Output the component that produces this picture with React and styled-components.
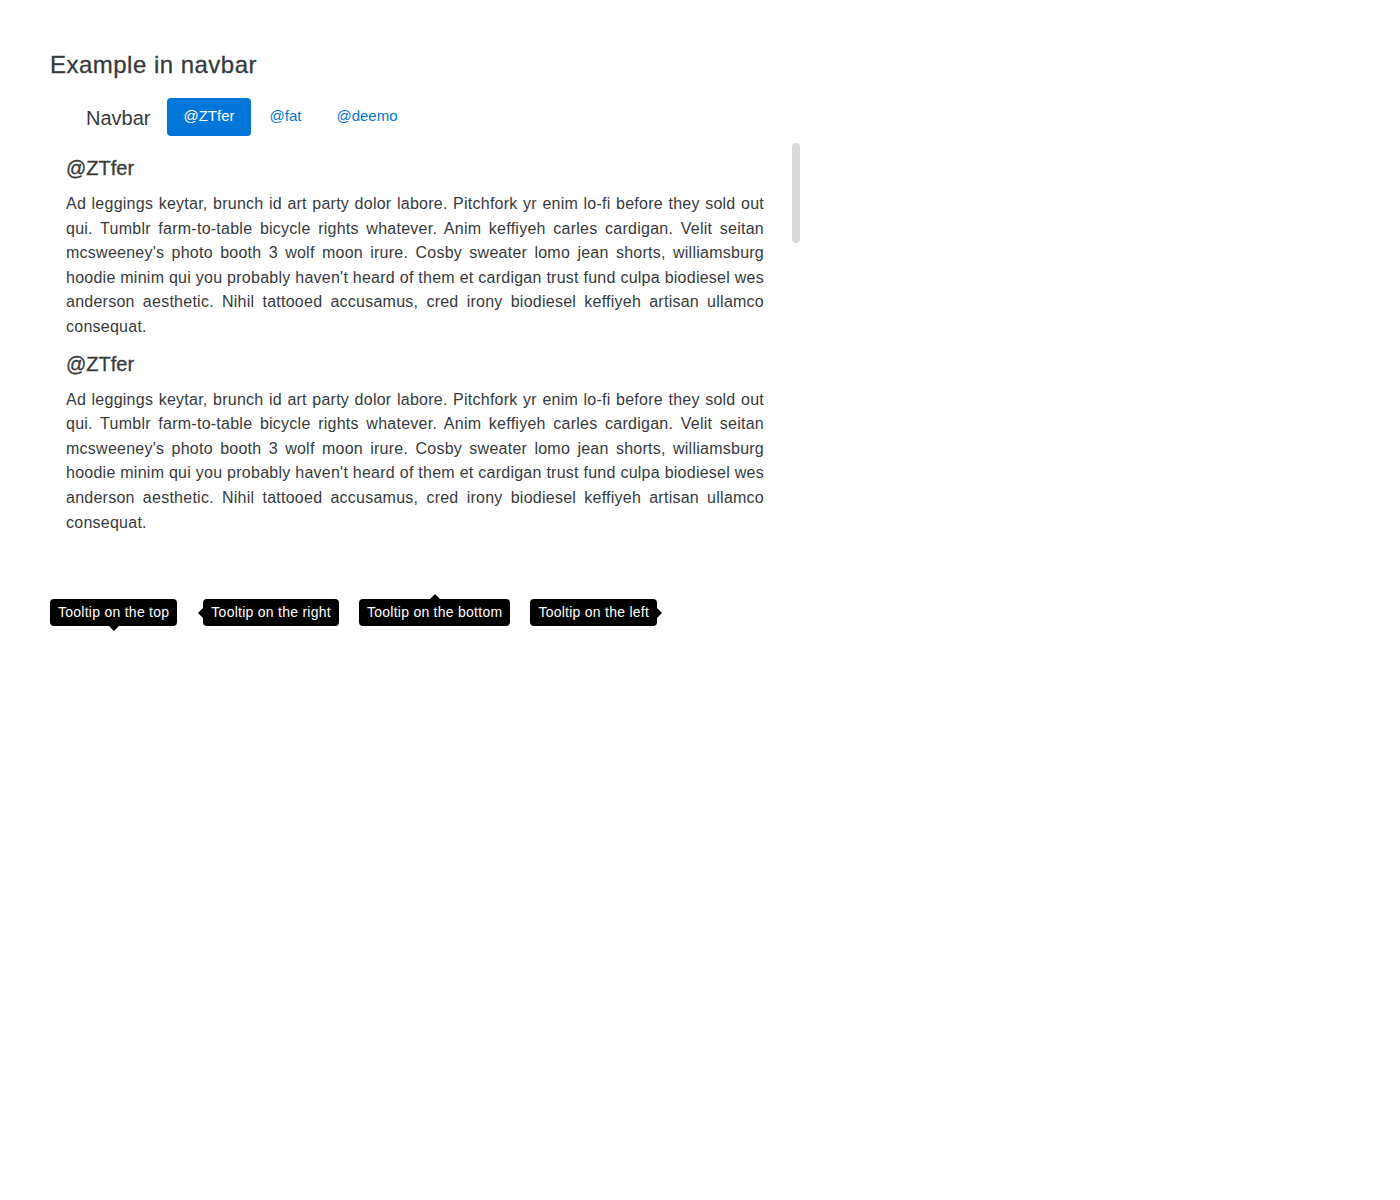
import React from 'react';
import styled, { createGlobalStyle, css } from 'styled-components';

const GlobalStyle = createGlobalStyle`
  html, body {
    margin: 0;
    padding: 0;
    background: #fff;
  }
  body {
    font-family: "Liberation Sans", Arial, Helvetica, sans-serif;
    color: #373a3c;
  }
`;

const filler =
  "Ad leggings keytar, brunch id art party dolor labore. Pitchfork yr enim lo-fi before they sold out qui. Tumblr farm-to-table bicycle rights whatever. Anim keffiyeh carles cardigan. Velit seitan mcsweeney's photo booth 3 wolf moon irure. Cosby sweater lomo jean shorts, williamsburg hoodie minim qui you probably haven't heard of them et cardigan trust fund culpa biodiesel wes anderson aesthetic. Nihil tattooed accusamus, cred irony biodiesel keffiyeh artisan ullamco consequat.";

const sections = [
  { id: 'ztfer-1', title: '@ZTfer' },
  { id: 'ztfer-2', title: '@ZTfer' },
  { id: 'fat-1', title: '@fat' },
  { id: 'fat-2', title: '@fat' },
  { id: 'deemo-1', title: '@deemo' },
  { id: 'deemo-2', title: '@deemo' },
  { id: 'deemo-3', title: '@deemo' },
  { id: 'deemo-4', title: '@deemo' }
];

const navItems = [
  { label: '@ZTfer', active: true },
  { label: '@fat' },
  { label: '@deemo' }
];

const tooltips = [
  { label: 'Tooltip on the top', placement: 'top' },
  { label: 'Tooltip on the right', placement: 'right' },
  { label: 'Tooltip on the bottom', placement: 'bottom' },
  { label: 'Tooltip on the left', placement: 'left' }
];

const App = () => (
  <Page>
    <GlobalStyle />
    <Title>Example in navbar</Title>
    <Navbar>
      <Brand>Navbar</Brand>
      <Nav>
        {navItems.map(item => (
          <NavLink key={item.label} active={item.active}>
            {item.label}
          </NavLink>
        ))}
      </Nav>
    </Navbar>
    <ScrollFrame>
      <ScrollArea>
        {sections.map(section => (
          <Section key={section.id}>
            <SectionTitle>{section.title}</SectionTitle>
            <Paragraph>{filler}</Paragraph>
          </Section>
        ))}
      </ScrollArea>
      <ScrollThumb />
    </ScrollFrame>
    <TooltipRow>
      {tooltips.map(tip => (
        <Tooltip key={tip.placement} placement={tip.placement}>
          {tip.label}
        </Tooltip>
      ))}
    </TooltipRow>
  </Page>
);

const Page = styled.div`
  padding: 52px 50px 40px;
`;

const Title = styled.h2`
  margin: 0;
  font-size: 24px;
  font-weight: 500;
  line-height: 26px;
  letter-spacing: 0.02em;
  color: #373a3c;
  -webkit-text-stroke: 0.3px #373a3c;
`;

const Navbar = styled.nav`
  display: flex;
  align-items: center;
  margin-top: 20px;
  padding-left: 36px;
  height: 38px;
`;

const Brand = styled.span`
  font-size: 20px;
  line-height: 24px;
  margin-right: 17px;
  margin-top: 2px;
  color: #373a3c;
`;

const Nav = styled.div`
  display: flex;
  align-items: center;
  gap: 3px;
`;

const NavLink = styled.a`
  display: block;
  padding: 0 16px;
  height: 38px;
  line-height: 35px;
  font-size: 15px;
  border-radius: 4px;
  cursor: pointer;
  color: ${props => (props.active ? '#fff' : '#0275d8')};
  background: ${props => (props.active ? '#0275d8' : 'transparent')};
`;

const ScrollFrame = styled.div`
  position: relative;
  margin-top: 7px;
  width: 750px;
  height: 400px;
`;

const ScrollArea = styled.div`
  height: 100%;
  overflow: hidden;
  box-sizing: border-box;
  padding: 13px 36px 0 16px;
`;

const ScrollThumb = styled.div`
  position: absolute;
  top: 0;
  right: 0;
  width: 8px;
  height: 100px;
  border-radius: 4px;
  background: #d9d9d9;
`;

const Section = styled.section`
  margin-bottom: 12px;
`;

const SectionTitle = styled.h4`
  margin: 0 0 12px;
  font-size: 20px;
  font-weight: 500;
  line-height: 24px;
  color: #373a3c;
  -webkit-text-stroke: 0.3px #373a3c;
`;

const Paragraph = styled.p`
  margin: 0;
  font-size: 16px;
  line-height: 24.6px;
  letter-spacing: 0.25px;
  text-align: justify;
  color: #373a3c;
`;

const TooltipRow = styled.div`
  display: flex;
  align-items: center;
  gap: 20px;
  margin-top: 56px;
`;

const arrows = {
  top: css`
    left: 50%;
    top: 100%;
    margin-left: -5px;
    border-width: 5px 5px 0;
    border-top-color: #000;
  `,
  bottom: css`
    left: 50%;
    bottom: 100%;
    margin-left: -5px;
    border-width: 0 5px 5px;
    border-bottom-color: #000;
  `,
  right: css`
    right: 100%;
    top: 50%;
    margin-top: -5px;
    border-width: 5px 5px 5px 0;
    border-right-color: #000;
  `,
  left: css`
    left: 100%;
    top: 50%;
    margin-top: -5px;
    border-width: 5px 0 5px 5px;
    border-left-color: #000;
  `
};

const Tooltip = styled.div`
  position: relative;
  background: #000;
  color: #fff;
  font-size: 14px;
  line-height: 21px;
  letter-spacing: 0.26px;
  padding: 3px 8px 3px;
  border-radius: 4px;
  margin-left: ${props => (props.placement === 'right' ? '6px' : '0')};

  &::after {
    content: '';
    position: absolute;
    width: 0;
    height: 0;
    border-style: solid;
    border-color: transparent;
    ${props => arrows[props.placement]}
  }
`;

export default App;
